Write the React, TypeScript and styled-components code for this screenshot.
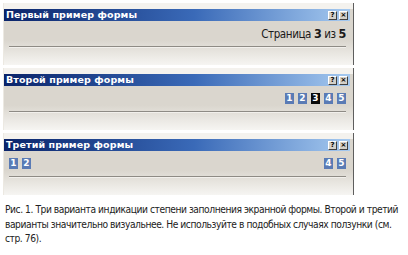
import styled, { createGlobalStyle } from "styled-components";

const GlobalStyle = createGlobalStyle`
  html, body {
    margin: 0;
    padding: 0;
    background: #ffffff;
  }
`;

const Page = styled.div`
  width: 408px;
  height: 255px;
  padding: 3px 0 0 3px;
  box-sizing: border-box;
  display: flex;
  flex-direction: column;
  gap: 3px;
`;

const Window = styled.div`
  width: 351px;
  height: 62px;
  box-sizing: border-box;
  display: flex;
  flex-direction: column;
  padding-top: 6px;
  border-right: 1px solid #5e5e5e;
  border-left: 1px solid #ece9e2;
  background: linear-gradient(
    to bottom,
    #f4f2ee 0px,
    #f4f2ee 6px,
    #dad6ce 6px,
    #dad6ce 60%,
    #f6f5f2 100%
  );
`;

const TitleBar = styled.div`
  height: 12px;
  margin-right: 3px;
  display: flex;
  align-items: center;
  justify-content: space-between;
  padding: 0 2px 0 2px;
  background: linear-gradient(to right, #0a246a 0%, #3a6ab8 55%, #a6caf0 100%);
`;

const Title = styled.span`
  font-family: "DejaVu Sans", sans-serif;
  font-weight: bold;
  font-size: 9.5px;
  color: #ffffff;
  line-height: 12px;
  letter-spacing: 0.1px;
`;

const Buttons = styled.div`
  display: flex;
  gap: 2px;
`;

const TitleButton = styled.span`
  width: 9px;
  height: 9px;
  box-sizing: border-box;
  background: #d4d0c8;
  border: 1px solid;
  border-color: #ffffff #404040 #404040 #ffffff;
  font-family: "DejaVu Sans", sans-serif;
  font-weight: bold;
  font-size: 7px;
  line-height: 7px;
  text-align: center;
  color: #000;
`;

const Body = styled.div`
  flex: 1;
  display: flex;
  flex-direction: column;
  padding: 0 7px 0 5px;
`;

const Row = styled.div<{ $align: string }>`
  height: 25px;
  display: flex;
  align-items: center;
  justify-content: ${(p) => p.$align};
`;

const Groove = styled.div`
  height: 1px;
  background: #8e8b85;
  border-bottom: 1px solid #f2f0ec;
`;

const PageText = styled.span`
  font-family: "DejaVu Sans Condensed", "DejaVu Sans", sans-serif;
  font-size: 11.5px;
  color: #1a1a1a;
  letter-spacing: -0.4px;
`;

const PageNum = styled.b`
  font-size: 12.5px;
  font-weight: bold;
`;

const Pager = styled.div`
  display: flex;
  gap: 4px;
`;

const Box = styled.span<{ $active?: boolean }>`
  width: 9px;
  height: 11px;
  background: ${(p) => (p.$active ? "#0a0a0a" : "#5a7bb5")};
  color: #ffffff;
  font-family: "DejaVu Sans", sans-serif;
  font-weight: bold;
  font-size: 9px;
  line-height: 11px;
  text-align: center;
`;

const Caption = styled.p`
  margin: 5px 0 0 2px;
  width: 400px;
  font-family: "DejaVu Sans Condensed", "DejaVu Sans", sans-serif;
  font-size: 10.2px;
  letter-spacing: -0.45px;
  line-height: 14.5px;
  color: #222222;
`;

const WindowFrame = ({
  title,
  children,
  align,
}: {
  title: string;
  children: React.ReactNode;
  align: string;
}) => (
  <Window>
    <TitleBar>
      <Title>{title}</Title>
      <Buttons>
        <TitleButton>?</TitleButton>
        <TitleButton>×</TitleButton>
      </Buttons>
    </TitleBar>
    <Body>
      <Row $align={align}>{children}</Row>
      <Groove />
    </Body>
  </Window>
);

const App = () => {
  return (
    <>
      <GlobalStyle />
      <Page>
        <WindowFrame title="Первый пример формы" align="flex-end">
          <PageText>
            Страница <PageNum>3</PageNum> из <PageNum>5</PageNum>
          </PageText>
        </WindowFrame>
        <WindowFrame title="Второй пример формы" align="flex-end">
          <Pager>
            <Box>1</Box>
            <Box>2</Box>
            <Box $active>3</Box>
            <Box>4</Box>
            <Box>5</Box>
          </Pager>
        </WindowFrame>
        <WindowFrame title="Третий пример формы" align="space-between">
          <Pager>
            <Box>1</Box>
            <Box>2</Box>
          </Pager>
          <Pager>
            <Box>4</Box>
            <Box>5</Box>
          </Pager>
        </WindowFrame>
        <Caption>
          Рис. 1. Три варианта индикации степени заполнения экранной формы. Второй и третий
          варианты значительно визуальнее. Не используйте в подобных случаях ползунки (см.
          стр. 76).
        </Caption>
      </Page>
    </>
  );
};

export default App;
